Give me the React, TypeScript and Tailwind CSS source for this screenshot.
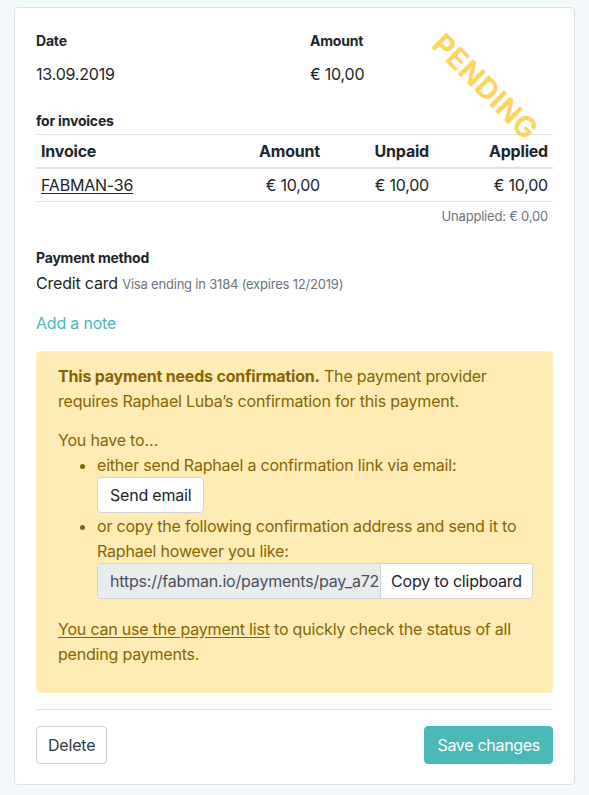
import React from "react";

const rows = [{id: "FABMAN-36", amount: "€ 10,00", unpaid: "€ 10,00", applied: "€ 10,00"}];

export default function App() {
    return (
        <div className="min-h-[795px] bg-[#f3f8fb] px-[14px] pt-[7px] pb-[10px] font-['Inter',sans-serif] tracking-[-0.2px] text-[#212529]">
            <div className="relative overflow-hidden rounded-[4px] border border-[#dde2e6] bg-white px-[21px] pt-[23px] pb-[20px]">
                {/* stamp */}
                <div className="pointer-events-none absolute left-[403px] top-[64px] rotate-45 text-[29px] font-bold leading-none tracking-[0.5px] text-[#ffd45c]">
                    PENDING
                </div>

                <div className="flex">
                    <div className="w-[274px]">
                        <div className="text-[14px] font-bold leading-[20px]">Date</div>
                        <div className="mt-[11px] text-[16px] leading-[24px]">13.09.2019</div>
                    </div>
                    <div>
                        <div className="text-[14px] font-bold leading-[20px]">Amount</div>
                        <div className="mt-[11px] text-[16px] leading-[24px]">€ 10,00</div>
                    </div>
                </div>

                <div className="mt-[25px] text-[14px] font-bold leading-[20px]">for invoices</div>
                <div className="mt-[3px] border-t border-[#dee2e6]">
                    <div className="grid grid-cols-[1fr_109px_109px_119px] border-b-2 border-[#dee2e6] px-[5px] py-[4px] text-[16px] font-bold leading-[24px]">
                        <div>Invoice</div>
                        <div className="text-right">Amount</div>
                        <div className="text-right">Unpaid</div>
                        <div className="text-right">Applied</div>
                    </div>
                    {rows.map((r) => (
                        <div key={r.id} className="grid grid-cols-[1fr_109px_109px_119px] border-b border-[#dee2e6] px-[5px] py-[4px] text-[16px] leading-[24px]">
                            <div><span className="underline underline-offset-2">{r.id}</span></div>
                            <div className="text-right">{r.amount}</div>
                            <div className="text-right">{r.unpaid}</div>
                            <div className="text-right">{r.applied}</div>
                        </div>
                    ))}
                </div>
                <div className="mt-[4px] pr-[5px] text-right text-[13px] leading-[20px] text-[#6c757d]">Unapplied: € 0,00</div>

                <div className="mt-[22px] text-[14px] font-bold leading-[20px]">Payment method</div>
                <div className="mt-[3px] text-[16px] leading-[24px]">
                    Credit card <span className="text-[13px] text-[#6c757d]">Visa ending in 3184 (expires 12/2019)</span>
                </div>

                <div className="mt-[15px] text-[16px] leading-[24px] text-[#4bb8b8]">Add a note</div>

                <div className="mt-[16px] rounded-[4px] border border-[#ffeeba] bg-[#ffecb5] px-[21px] pt-[12px] pb-[26px] text-[16px] leading-[24.5px] text-[#856404]">
                    <p><b>This payment needs confirmation.</b> The payment provider requires Raphael Luba’s confirmation for this payment.</p>
                    <p className="mt-[15px]">You have to…</p>
                    <ul className="list-disc pl-[39px]">
                        <li>
                            either send Raphael a confirmation link via email:
                            <div>
                                <button className="rounded-[4px] border border-[#ced4da] bg-white px-[12px] py-[5px] leading-[24px] text-[#212529]">Send email</button>
                            </div>
                        </li>
                        <li className="mt-[1px]">
                            or copy the following confirmation address and send it to Raphael however you like:
                            <div className="flex w-[436px] overflow-hidden rounded-[4px] border border-[#ced4da]">
                                <div className="w-[282px] overflow-hidden whitespace-nowrap bg-[#e9ecef] px-[12px] py-[5px] text-[#495057] leading-[24px]">
                                    https://fabman.io/payments/pay_a72b91c
                                </div>
                                <button className="flex-1 whitespace-nowrap border-l border-[#ced4da] bg-white py-[5px] text-center leading-[24px] text-[#212529]">Copy to clipboard</button>
                            </div>
                        </li>
                    </ul>
                    <p className="mt-[18px]"><span className="underline underline-offset-2">You can use the payment list</span> to quickly check the status of all pending payments.</p>
                </div>

                <div className="mt-[16px] flex items-center justify-between border-t border-[#dee2e6] pt-[16px]">
                    <button className="rounded-[4px] border border-[#ced4da] bg-white px-[11px] py-[6px] text-[16px] leading-[24px] text-[#343a40]">Delete</button>
                    <button className="rounded-[4px] border border-[#4bb8b8] bg-[#4bb8b8] px-[12px] py-[6px] text-[16px] leading-[24px] tracking-[-0.3px] text-white">Save changes</button>
                </div>
            </div>
        </div>
    );
}
